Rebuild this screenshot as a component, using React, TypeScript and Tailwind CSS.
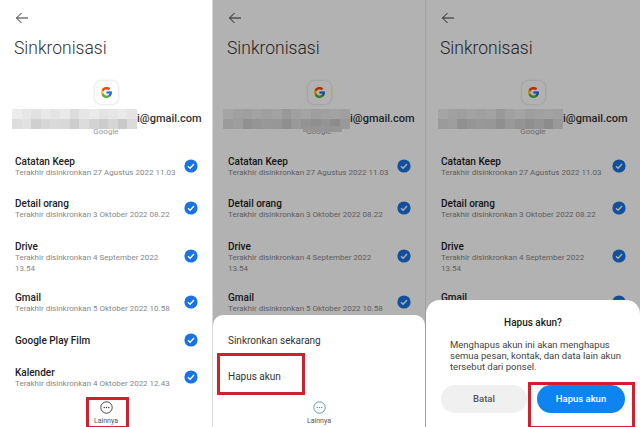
import { FcGoogle } from "react-icons/fc";

const font = "font-['Roboto','Liberation_Sans',sans-serif]";

const syncItems = [
	{ title: "Catatan Keep", lines: ["Terakhir disinkronkan 27 Agustus 2022 11.03"], rowClass: "h-[42px]", checkClass: "mt-[4px]" },
	{ title: "Detail orang", lines: ["Terakhir disinkronkan 3 Oktober 2022 08.22"], rowClass: "h-[43px]", checkClass: "mt-[4px]" },
	{ title: "Drive", lines: ["Terakhir disinkronkan 4 September 2022", "13.54"], rowClass: "h-[51px]", checkClass: "mt-[9px]" },
	{ title: "Gmail", lines: ["Terakhir disinkronkan 5 Oktober 2022 10.58"], rowClass: "h-[43px]", checkClass: "mt-[4px]" },
	{ title: "Google Play Film", lines: [], rowClass: "h-[32px]", checkClass: "mt-[-1px]" },
	{ title: "Kalender", lines: ["Terakhir disinkronkan 4 Oktober 2022 12.43"], rowClass: "h-[43px]", checkClass: "mt-[4px]" },
];

// behind the sheet only the first rows can be seen
const sheetItems = syncItems.slice(0, 4);
const dialogItems = syncItems.slice(0, 3).concat({ ...syncItems[3], lines: [] });

const blurCells = [
	"bg-[#ececec]", "bg-[#e6e6e6]", "bg-[#e2e2e2]", "bg-[#e8e8e8]", "bg-[#e4e4e4]", "bg-[#e9e9e9]", "bg-[#dcdcdc]",
	"bg-[#e6e6e6]", "bg-[#ebebeb]", "bg-[#e3e3e3]", "bg-[#e6e6e6]", "bg-[#e9e9e9]", "bg-[#e4e4e4]",
	"bg-[#dedede]", "bg-[#e2e2e2]", "bg-[#cfcfcf]", "bg-[#d6d6d6]", "bg-[#dadada]", "bg-[#d8d8d8]", "bg-[#cdcdcd]",
	"bg-[#dcdcdc]", "bg-[#d3d3d3]", "bg-[#cccccc]", "bg-[#d5d5d5]", "bg-[#c9c9c9]", "bg-[#dbdbdb]",
];

const CheckMark = () => (
	<svg width="14" height="14" viewBox="0 0 14 14" className="shrink-0">
		<circle cx="7" cy="7" r="6.6" fill="#1a73e0" />
		<path d="M4 7.3l2.1 2 3.9-4.3" fill="none" stroke="#fff" strokeWidth="1.3" />
	</svg>
);

const BackArrow = () => (
	<svg width="14" height="12" viewBox="0 0 14 12" fill="none" stroke="#333" strokeWidth="1">
		<path d="M13 6H1.5M6.5 1L1.5 6l5 5" />
	</svg>
);

const MoreButton = ({ tint = "#333" }: { tint?: string }) => (
	<div className="flex flex-col items-center">
		<svg width="13" height="13" viewBox="0 0 13 13">
			<circle cx="6.5" cy="6.5" r="5.7" fill="none" stroke={tint} strokeWidth="0.9" />
			<circle cx="4.2" cy="6.5" r="0.7" fill={tint} />
			<circle cx="6.5" cy="6.5" r="0.7" fill={tint} />
			<circle cx="8.8" cy="6.5" r="0.7" fill={tint} />
		</svg>
		<span className="mt-[3px] text-[7px] leading-[9px] text-[#555]">Lainnya</span>
	</div>
);

interface SyncScreenProps {
	items: typeof syncItems;
	blurClass?: string;
}

const SyncScreen = ({ items, blurClass = "w-[125px]" }: SyncScreenProps) => (
	<div className="flex h-full flex-col">
		<div className="pl-[15px] pt-[12px] h-[24px]">
			<BackArrow />
		</div>
		<h1 className="ml-[14px] mt-[12px] text-[17.5px] leading-[24px] font-light text-[#333]">Sinkronisasi</h1>
		<div className="mx-auto mt-[21px] flex h-[23px] w-[23px] items-center justify-center rounded-[6px] bg-white shadow-[0_0_3px_rgba(0,0,0,0.2)]">
			<FcGoogle size={13} />
		</div>
		<div className="mt-[5px] flex h-[20px] items-center pl-[12px]">
			<div className={`grid h-[20px] grid-cols-[repeat(13,1fr)] grid-rows-2 ${blurClass}`}>
				{blurCells.map((cell, i) => (
					<div key={i} className={cell} />
				))}
			</div>
			<span className="text-[11px] font-medium leading-[20px] text-[#333]">i@gmail.com</span>
		</div>
		<div className="mt-[-2px] text-center text-[8px] leading-[10px] text-[#999]">Google</div>
		<div className="mt-[18px] flex flex-col">
			{items.map((item) => (
				<div key={item.title} className={`flex items-start justify-between pl-[15px] pr-[14px] ${item.rowClass}`}>
					<div>
						<div className="text-[10px] font-medium leading-[13px] text-[#222]">{item.title}</div>
						{item.lines.map((line) => (
							<div key={line} className="text-[8px] leading-[10.5px] text-[#888]">
								{line}
							</div>
						))}
					</div>
					<div className={item.checkClass}>
						<CheckMark />
					</div>
				</div>
			))}
		</div>
	</div>
);

const App = () => {
	return (
		<div className={`flex h-[427px] w-[640px] overflow-hidden bg-white ${font}`}>
			{/* first phone */}
			<div className="relative h-full w-[213px] border-r border-[#d8d8d8] bg-white">
				<SyncScreen items={syncItems} />
				<div className="absolute bottom-[1px] left-0 right-0 flex justify-center">
					<MoreButton />
				</div>
				<div className="absolute left-[86px] top-[397px] h-[32px] w-[43px] border-[3px] border-[#d0202c]" />
			</div>

			{/* second phone, bottom sheet */}
			<div className="relative h-full w-[213px] border-r border-[#a0a0a0] bg-white">
				<SyncScreen items={sheetItems} blurClass="ml-[-2px] w-[127px]" />
				<div className="absolute left-[90px] top-[126px] h-[6px] w-[39px] bg-[#d6d6d6]" />
				<div className="absolute inset-0 bg-black/30" />
				<div className="absolute bottom-0 left-0 right-0 flex h-[112px] flex-col rounded-t-[10px] bg-white">
					<div className="ml-[15px] mt-[18px] text-[10px] leading-[15px] text-[#333]">Sinkronkan sekarang</div>
					<div className="ml-[15px] mt-[21px] text-[10px] leading-[15px] text-[#333]">Hapus akun</div>
					<div className="mt-auto mb-[1px] flex justify-center">
						<MoreButton tint="#4d8fa8" />
					</div>
				</div>
				<div className="absolute left-[4px] top-[353px] h-[42px] w-[88px] border-[3px] border-[#d0202c]" />
			</div>

			{/* third phone, confirm dialog */}
			<div className="relative h-full w-[214px] bg-white">
				<SyncScreen items={dialogItems} />
				<div className="absolute inset-0 bg-black/30" />
				<div className="absolute bottom-0 left-0 right-0 flex h-[127px] flex-col rounded-t-[14px] bg-white">
					<div className="mt-[16px] text-center text-[10px] font-medium leading-[14px] text-[#222]">Hapus akun?</div>
					<p className="ml-[24px] mr-[16px] mt-[9px] text-[9.5px] leading-[11px] text-[#444]">
						Menghapus akun ini akan menghapus semua pesan, kontak, dan data lain akun tersebut dari ponsel.
					</p>
					<div className="mt-[13px] flex gap-[10px] px-[15px]">
						<div className="flex h-[28px] w-[86px] items-center justify-center rounded-full bg-[#f0f0f0] text-[9.5px] font-medium text-[#555]">
							Batal
						</div>
						<div className="flex h-[28px] w-[88px] items-center justify-center rounded-full bg-[#0d84f0] text-[9.5px] font-medium text-white">
							Hapus akun
						</div>
					</div>
				</div>
				<div className="absolute left-[102px] top-[382px] h-[47px] w-[107px] border-[3px] border-[#d0202c]" />
			</div>
		</div>
	);
};

export default App;
